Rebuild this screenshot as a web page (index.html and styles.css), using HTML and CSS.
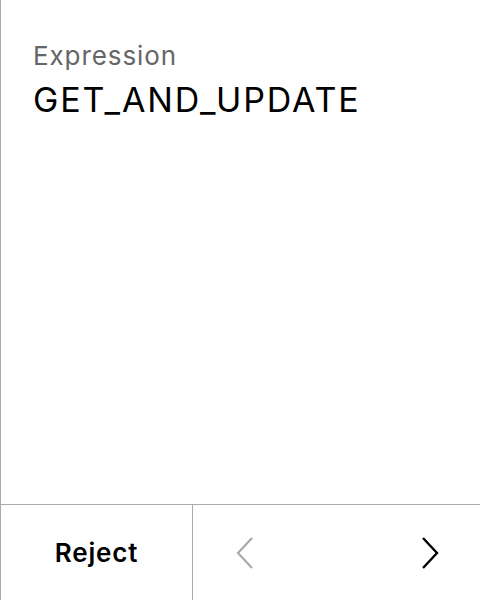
FILE: index.html
```html
<!DOCTYPE html>
<html>
<head>
<meta charset="utf-8">
<link rel="stylesheet" href="styles.css">
</head>
<body>
<div class="screen">
  <div class="content">
    <div class="label">Expression</div>
    <div class="value">GET_AND_UPDATE</div>
  </div>
  <div class="bar">
    <div class="reject">Reject</div>
    <div class="nav">
      <span class="chev prev"><svg width="20" height="34" viewBox="0 0 20 34"><path d="M17 2 L3 17 L17 32" fill="none" stroke="#aaaaaa" stroke-width="2.2"/></svg></span>
      <span class="chev next"><svg width="20" height="34" viewBox="0 0 20 34"><path d="M3 2 L17 17 L3 32" fill="none" stroke="#000" stroke-width="2.4"/></svg></span>
    </div>
  </div>
</div>
</body>
</html>
```
FILE: styles.css
```css
html, body { margin: 0; padding: 0; background: #fff; }
body { font-family: Inter, "Noto Sans", sans-serif; }
.screen {
  width: 480px; height: 600px; box-sizing: border-box;
  border-left: 1px solid #aaaaaa;
  display: flex; flex-direction: column;
}
.content { flex: 1; padding: 40px 0 0 32px; }
.label { font-size: 26px; color: #666; line-height: 32px; letter-spacing: 0.9px; }
.value { font-size: 34px; color: #000; line-height: 40px; margin-top: 8px; letter-spacing: 1.9px; }
.bar {
  height: 96px; border-top: 1px solid #aaaaaa; box-sizing: border-box;
  display: flex;
}
.reject {
  width: 191px; border-right: 1px solid #aaaaaa;
  display: flex; align-items: center; justify-content: center;
  font-size: 26px; font-weight: 600; color: #000; letter-spacing: 0.8px;
}
.nav { flex: 1; display: flex; align-items: center; justify-content: space-between; padding: 0 40px 0 42px; }
.chev svg { display: block; }
```
